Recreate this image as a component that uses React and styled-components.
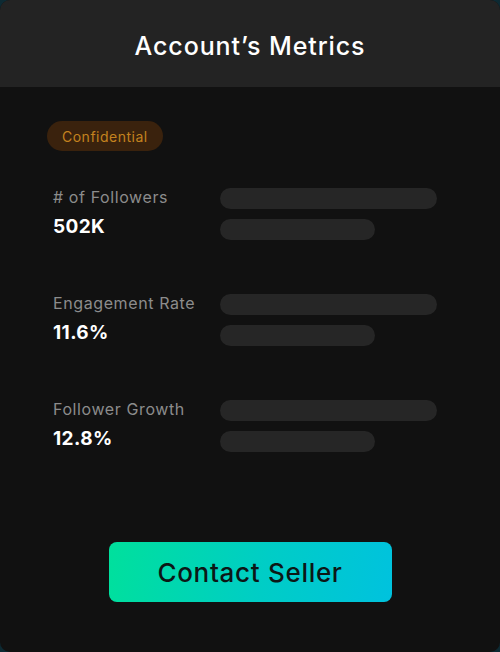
import styled, { createGlobalStyle } from "styled-components";

const GlobalStyle = createGlobalStyle`
    html, body {
        margin: 0;
        padding: 0;
        background: #0d2a33;
    }
    body {
        font-family: "Inter", "Open Sans", sans-serif;
    }
`;

const metrics = [
    { label: "# of Followers", value: "502K" },
    { label: "Engagement Rate", value: "11.6%" },
    { label: "Follower Growth", value: "12.8%" },
];

function App() {
    return (
        <>
            <GlobalStyle />
            <Card>
                <Header>
                    <Title>Account’s Metrics</Title>
                </Header>
                <Body>
                    <Badge>Confidential</Badge>
                    <MetricList>
                        {metrics.map((m) => (
                            <MetricRow key={m.label}>
                                <MetricText>
                                    <Label>{m.label}</Label>
                                    <Value>{m.value}</Value>
                                </MetricText>
                                <Bars>
                                    <Bar $width={217} />
                                    <Bar $width={155} />
                                </Bars>
                            </MetricRow>
                        ))}
                    </MetricList>
                    <ButtonWrap>
                        <ContactButton>Contact Seller</ContactButton>
                    </ButtonWrap>
                </Body>
            </Card>
        </>
    );
}

export default App;

const Card = styled.div`
    width: 500px;
    height: 652px;
    border-radius: 10px;
    overflow: hidden;
    background-color: #111111;
    display: flex;
    flex-direction: column;
`;

const Header = styled.div`
    height: 87px;
    background-color: #232323;
    display: flex;
    align-items: center;
    justify-content: center;
`;

const Title = styled.h1`
    margin: 0;
    font-size: 25px;
    font-weight: 500;
    color: #ffffff;
    letter-spacing: 0.9px;
    padding-top: 4px;
`;

const Body = styled.div`
    flex: 1;
    display: flex;
    flex-direction: column;
    padding: 34px 0 0 47px;
`;

const Badge = styled.span`
    align-self: flex-start;
    height: 30px;
    padding: 0 15px;
    border-radius: 15px;
    background-color: #3a220d;
    color: #c4821f;
    font-size: 14px;
    letter-spacing: 0.5px;
    display: flex;
    align-items: center;
`;

const MetricList = styled.div`
    display: flex;
    flex-direction: column;
    gap: 54px;
    margin-top: 37px;
    padding-left: 6px;
`;

const MetricRow = styled.div`
    display: flex;
    align-items: flex-start;
`;

const MetricText = styled.div`
    width: 167px;
    display: flex;
    flex-direction: column;
    gap: 10px;
`;

const Label = styled.div`
    font-size: 16px;
    color: #8c8c8c;
    line-height: 18px;
    letter-spacing: 0.6px;
`;

const Value = styled.div`
    font-size: 19px;
    font-weight: 700;
    color: #ffffff;
    line-height: 22px;
    letter-spacing: 0.4px;
`;

const Bars = styled.div`
    display: flex;
    flex-direction: column;
    gap: 10px;
`;

const Bar = styled.div`
    width: ${(p) => p.$width}px;
    height: 21px;
    border-radius: 11px;
    background-color: #262626;
`;

const ButtonWrap = styled.div`
    display: flex;
    justify-content: center;
    margin-top: 90px;
    padding-right: 47px;
`;

const ContactButton = styled.button`
    width: 283px;
    height: 60px;
    border: none;
    border-radius: 8px;
    background: linear-gradient(100deg, #00e09c 0%, #00cdc6 55%, #00c2de 100%);
    color: #0c1716;
    font-family: "Inter", "Open Sans", sans-serif;
    font-size: 26px;
    font-weight: 500;
    letter-spacing: 0.7px;
    padding-top: 2px;
    cursor: pointer;
`;
